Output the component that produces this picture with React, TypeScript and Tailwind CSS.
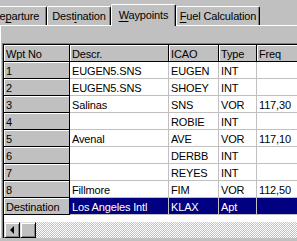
import React from 'react';

const font = "font-['Liberation_Sans',Arial,sans-serif]";

const tabs = [
  { label: 'Departure', mn: 2, w: 'w-[63px] ml-[-16px]' },
  { label: 'Destination', mn: 4, w: 'w-[64px]' },
  { label: 'Waypoints', mn: 0, w: 'w-[65px]', selected: true },
  { label: 'Fuel Calculation', mn: 0, w: 'w-[84px]' },
];

const rows = [
  ['1', 'EUGEN5.SNS', 'EUGEN', 'INT', ''],
  ['2', 'EUGEN5.SNS', 'SHOEY', 'INT', ''],
  ['3', 'Salinas', 'SNS', 'VOR', '117,30'],
  ['4', '', 'ROBIE', 'INT', ''],
  ['5', 'Avenal', 'AVE', 'VOR', '117,10'],
  ['6', '', 'DERBB', 'INT', ''],
  ['7', '', 'REYES', 'INT', ''],
  ['8', 'Fillmore', 'FIM', 'VOR', '112,50'],
  ['Destination', 'Los Angeles Intl', 'KLAX', 'Apt', ''],
];

const header = ['Wpt No', 'Descr.', 'ICAO', 'Type', 'Freq'];
const widths = ['w-[66px]', 'w-[99px]', 'w-[50px]', 'w-[38px]', 'w-[90px]'];

function Mnemonic({ label, mn }: { label: string; mn: number }) {
  return (
    <span>
      {label.slice(0, mn)}
      <span className="underline underline-offset-[2px]">{label[mn]}</span>
      {label.slice(mn + 1)}
    </span>
  );
}

function Tab({ label, mn, w, selected }: { label: string; mn: number; w: string; selected?: boolean }) {
  if (selected) {
    return (
      <div
        className={`${w} h-[22px] mb-[-1px] relative z-10 shrink-0 bg-[#c0c0c0] border-t border-l border-white border-r border-r-black rounded-t-[2px] shadow-[inset_-1px_0_0_#808080] flex justify-center pt-[3px] leading-[14px]`}
      >
        <Mnemonic label={label} mn={mn} />
      </div>
    );
  }
  return (
    <div
      className={`${w} h-[19px] shrink-0 bg-[#c0c0c0] border-t border-l border-white border-r border-r-black rounded-t-[2px] shadow-[inset_-1px_0_0_#808080] flex justify-center pt-[2px] leading-[14px]`}
    >
      <Mnemonic label={label} mn={mn} />
    </div>
  );
}

function FixedCell({ text, w }: { text: string; w: string }) {
  return (
    <div
      className={`${w} shrink-0 h-[17px] bg-[#c0c0c0] border-r border-b border-black shadow-[inset_1px_1px_0_#fff] pl-[2px] pt-[1px] leading-[16px] overflow-hidden whitespace-nowrap`}
    >
      {text}
    </div>
  );
}

function Cell({ text, w, selected }: { text: string; w: string; selected?: boolean }) {
  return (
    <div
      className={`${w} shrink-0 h-[17px] border-r border-b border-[#c0c0c0] pl-[2px] pt-[1px] leading-[16px] overflow-hidden whitespace-nowrap ${
        selected ? 'bg-[#000080] text-white' : 'bg-white'
      }`}
    >
      {text}
    </div>
  );
}

const raised =
  'bg-[#c0c0c0] border border-t-[#dfdfdf] border-l-[#dfdfdf] border-r-black border-b-black shadow-[inset_1px_1px_0_#fff,inset_-1px_-1px_0_#808080]';

export default function App() {
  return (
    <div className={`w-[297px] h-[241px] overflow-hidden bg-[#c0c0c0] text-black text-[11px] tracking-[-0.15px] ${font}`}>
      {/* tab strip */}
      <div className="h-[26px] flex items-end border-b border-white">
        {tabs.map((t) => (
          <Tab key={t.label} {...t} />
        ))}
      </div>

      {/* tab page */}
      <div className="border-l border-white pl-[1px] pt-[17px]">
        <div className="border-t border-l border-[#808080]">
          <div className="border-t border-l border-black bg-white">
            <div className="flex">
              {header.map((h, i) => (
                <FixedCell key={h} text={h} w={widths[i]} />
              ))}
            </div>
            {rows.map((r, ri) => {
              const sel = ri === rows.length - 1;
              return (
                <div key={ri} className="flex">
                  <FixedCell text={r[0]} w={widths[0]} />
                  {r.slice(1).map((c, ci) => (
                    <Cell key={ci} text={c} w={widths[ci + 1]} selected={sel} />
                  ))}
                </div>
              );
            })}
            <div className="h-[7px] bg-white" />
            {/* horizontal scrollbar */}
            <div className="flex h-[16px]">
              <div className={`w-[16px] shrink-0 ${raised} flex items-center justify-center`}>
                <div className="w-0 h-0 border-y-[4px] border-y-transparent border-r-[4px] border-r-black" />
              </div>
              <div className={`w-[16px] shrink-0 ${raised}`} />
              <div className="flex-1 bg-[repeating-conic-gradient(#c0c0c0_0_25%,#ffffff_0_50%)] bg-[length:2px_2px]" />
            </div>
          </div>
        </div>
      </div>
    </div>
  );
}
